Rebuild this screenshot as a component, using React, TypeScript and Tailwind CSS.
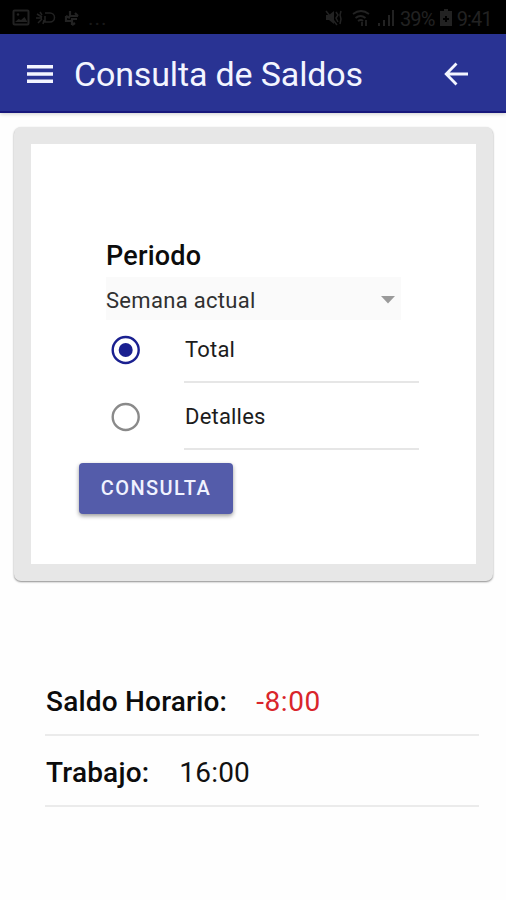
import type { ReactNode } from "react";

function StatusBar() {
  return (
    <div className="flex h-[34px] items-center bg-black pl-[12px] pr-[14px] pt-[1px] text-[#222222]">
      <svg width="18" height="18" viewBox="0 0 18 18" className="shrink-0">
        <rect x="1.5" y="1.5" width="15" height="14" rx="1" fill="none" stroke="currentColor" strokeWidth="2" />
        <path d="M3 13l3.5-3 2.5 1 3.5-3 3 5z" fill="currentColor" />
        <circle cx="6" cy="5.5" r="1.2" fill="currentColor" />
      </svg>
      <svg width="20" height="18" viewBox="0 0 20 18" className="ml-[6px] shrink-0" fill="none" stroke="currentColor" strokeWidth="1.5">
        <path d="M0 9h6M4 3l2 3M2 14l4-4M1 5l5 3M7 15l1-4M9 4h5a4.5 4.5 0 0 1 0 9H9V7" />
      </svg>
      <svg width="16" height="18" viewBox="0 0 16 18" className="ml-[8px] shrink-0" fill="none" stroke="currentColor" strokeWidth="2.2">
        <path d="M6 2v5h8M14 7l-3-3M13 10H8v6M8 16l3-2M7 12H2V7M2 7l4 2" />
      </svg>
      <span className="ml-[8px] mt-[2px] font-[Roboto,sans-serif] text-[21px] leading-none tracking-[1px] text-[#191919]">...</span>
      <div className="ml-auto flex items-center">
        <svg width="20" height="18" viewBox="0 0 20 18" fill="currentColor" className="mr-[9px]">
          <path d="M3 6h3l5-4v13l-5-4H3z" />
          <path d="M3 2l11 14M13 3l2 3-2 3 2 4M18 2l-1 4 1 4-1 5" fill="none" stroke="currentColor" strokeWidth="1.5" />
        </svg>
        <svg width="18" height="18" viewBox="0 0 18 18" fill="none" stroke="currentColor" strokeWidth="1.8" className="mr-[7px]">
          <path d="M1 5q8-6 16 0M3.5 9q5-4 10 0M6 12q3-2 5 0M10 13v4M14 11v6" />
        </svg>
        <svg width="18" height="18" viewBox="0 0 18 18" fill="currentColor" className="mr-[5px]">
          <path d="M1 14h2v3H1zM6 11h2v6H6zM11 6h2v11h-2zM15 1h2v16h-2z" />
        </svg>
        <span className="mt-[2px] font-[Roboto,sans-serif] text-[20px] leading-none tracking-[-0.8px]">39%</span>
        <svg width="12" height="18" viewBox="0 0 12 18" className="ml-[5px]">
          <path fill="currentColor" fillRule="evenodd" d="M4 0h4v2h4v15H0V2h4zM3 9v2h2v2h2v-2h2V9H7V7H5v2z" />
        </svg>
        <span className="ml-[5px] mt-[2px] font-[Roboto,sans-serif] text-[20px] leading-none tracking-[-0.8px]">9:41</span>
      </div>
    </div>
  );
}

function Header() {
  return (
    <header className="flex h-[79px] items-center border-b-2 border-[#17177c] bg-[#293393] pl-[26px] pr-[37px] text-[#f3f5ff] shadow-[0_1px_4px_rgba(0,0,0,0.2)]">
      <svg width="28" height="20" viewBox="0 0 28 20" fill="currentColor" className="mt-[2px] shrink-0">
        <path d="M1 1h26v3.4H1zM1 8.3h26v3.4H1zM1 15.6h26V19H1z" />
      </svg>
      <h1 className="ml-[20px] mt-[3px] whitespace-nowrap text-[34px] leading-[40px] tracking-[-0.15px]">Consulta de Saldos</h1>
      <svg width="24" height="24" viewBox="0 0 24 24" fill="none" stroke="currentColor" strokeWidth="2.8" className="ml-auto mr-[1px] mt-[2px] shrink-0">
        <path d="M12.5 1.5L2.2 12l10.3 10.5M2.2 12H24" />
      </svg>
    </header>
  );
}

function RadioRow({ label, checked = false }: { label: string; checked?: boolean }) {
  return (
    <div className="flex h-[67px] pl-[80px]">
      <svg width="30" height="30" viewBox="0 0 30 30" className="mt-[19px] shrink-0">
        <circle cx="14.7" cy="15" r="13" fill="none" strokeWidth="2.4" stroke={checked ? "#1a2090" : "#8a8a8a"} />
        {checked && <circle cx="14.7" cy="15" r="7" fill="#1a2090" />}
      </svg>
      <div className="ml-[43px] w-[235px] border-b-2 border-[#e6e6e6] pl-[1px]">
        <span className="mt-[20px] block text-[22px] leading-[28px] tracking-[0.2px] text-[#1c1c1c]">{label}</span>
      </div>
    </div>
  );
}

function BalanceRow({ label, children }: { label: string; children: ReactNode }) {
  return (
    <div className="flex h-[71px] items-center border-b-2 border-[#ebebeb] pl-[1px] pt-[4px] text-[28px] leading-[32px] tracking-[0.2px]">
      <span className="font-medium text-[#0c0c0c]">{label}</span>
      {children}
    </div>
  );
}

export default function App() {
  return (
    <div className="h-[900px] w-[506px] overflow-hidden bg-[#fefefe] font-[Roboto,sans-serif]">
      <StatusBar />
      <Header />
      <main>
        <section className="ml-[14px] mt-[14px] h-[454px] w-[479px] rounded-[7px] bg-[#e7e7e7] px-[17px] pt-[17px] shadow-[0_1px_2px_rgba(0,0,0,0.45)]">
          <div className="h-[420px] w-[445px] bg-white pt-[95px]">
            <h2 className="ml-[75px] text-[27px] font-medium leading-[34px] tracking-[0.2px] text-[#0c0c0c]">Periodo</h2>
            <div className="ml-[75px] mt-[4px] flex h-[43px] w-[295px] items-center justify-between bg-[#fafafa] pr-[6px]">
              <span className="mt-[4px] text-[22px] leading-[28px] tracking-[0.3px] text-[#303030]">Semana actual</span>
              <svg width="14" height="8" viewBox="0 0 14 8" className="mt-[2px]">
                <path d="M0 0h14L7 7.5z" fill="#9a9a9a" />
              </svg>
            </div>
            <div className="-mt-[4px]">
              <RadioRow label="Total" checked />
              <RadioRow label="Detalles" />
            </div>
            <button className="ml-[48px] mt-[13px] h-[51px] w-[154px] rounded-[4px] bg-[#545caa] pb-[1px] text-[20px] font-medium tracking-[1.4px] text-[#f0f2ff] shadow-[0_2px_4px_rgba(0,0,0,0.4)]">
              CONSULTA
            </button>
          </div>
        </section>
        <section className="ml-[45px] mt-[84px] w-[434px]">
          <BalanceRow label="Saldo Horario:">
            <span className="ml-[29px] tracking-[0.6px] text-[#d9252b]">-8:00</span>
          </BalanceRow>
          <BalanceRow label="Trabajo:">
            <span className="ml-[30px] tracking-[0.2px] text-[#111111]">16:00</span>
          </BalanceRow>
        </section>
      </main>
    </div>
  );
}
